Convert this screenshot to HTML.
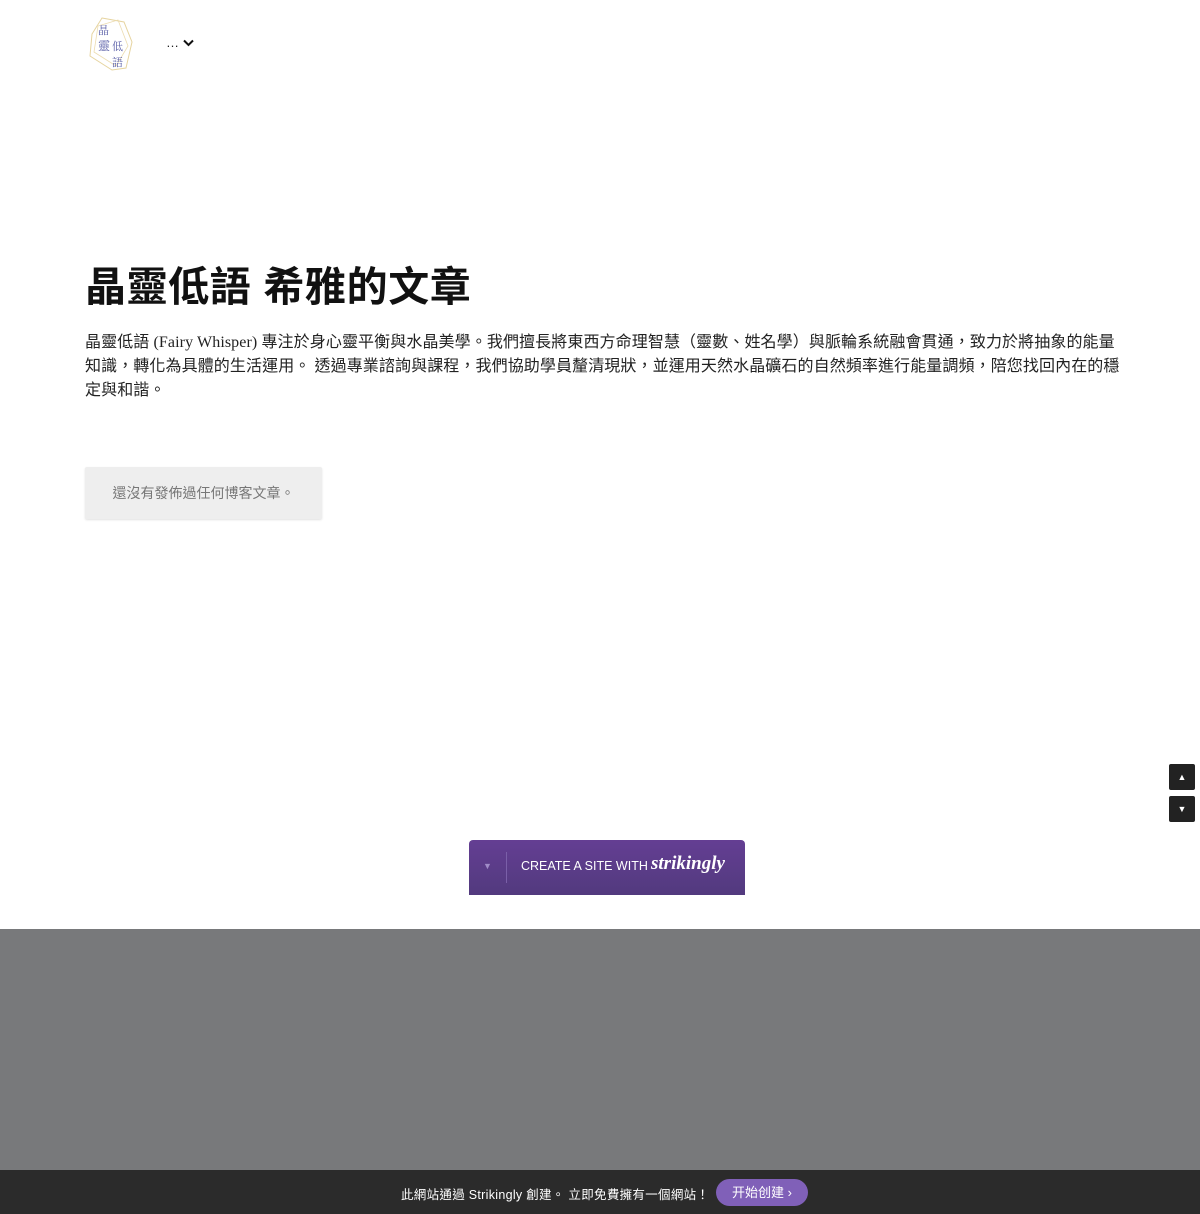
<!DOCTYPE html>
<html><head><meta charset="utf-8"><style>
body{margin:0;width:1200px;height:1214px;background:#fff;position:relative;overflow:hidden;font-family:"Liberation Sans","Noto Sans CJK TC",sans-serif;}
.abs{position:absolute}
h1{position:absolute;left:85px;top:258px;margin:0;font-size:41px;font-weight:700;color:#111;letter-spacing:0.6px;font-family:"Liberation Sans","Noto Sans CJK TC",sans-serif;line-height:58px}
.p{position:absolute;left:85px;top:331px;width:1040px;font-size:16px;letter-spacing:0.1px;line-height:24px;color:#222;font-family:"Liberation Serif","Noto Sans CJK TC",serif}
.empty{position:absolute;left:85px;top:467px;width:237px;height:52px;background:#eeeeee;border-radius:2px;box-shadow:0 1px 2px rgba(0,0,0,.12);color:#777;font-size:14px;line-height:52px;text-align:center}
.arr{position:absolute;left:1169px;width:26px;height:26px;background:#222;border-radius:2px;color:#fff;font-size:9px;text-align:center;line-height:26px}
.btn{position:absolute;left:469px;top:840px;width:276px;height:55px;background:linear-gradient(#643e93,#523a7e);border-radius:4px 4px 0 0;color:#fff}
.gray{position:absolute;left:0;top:929px;width:1200px;height:241px;background:#78797b}
.bar{position:absolute;left:0;top:1170px;width:1200px;height:44px;background:#2b2b2b;color:#fff;font-size:13px}
</style></head><body>
<svg class="abs" style="left:88px;top:16px" width="46" height="56" viewBox="0 0 46 56">
<polygon points="14,2 36,6 44,26 38,52 24,54 2,40 4,18" fill="none" stroke="#e6d4a0" stroke-width="1"/>
<polygon points="10,10 30,4 40,30 28,50 6,36" fill="none" stroke="#ecdcb0" stroke-width="0.8"/>
<text x="10" y="18" font-size="11" fill="#5a5fa8" font-family="Noto Serif CJK SC,serif">晶</text>
<text x="10" y="34" font-size="12" fill="#5a5fa8" font-family="Noto Serif CJK SC,serif">靈</text>
<text x="24" y="34" font-size="11" fill="#5a5fa8" font-family="Noto Serif CJK SC,serif">低</text>
<text x="24" y="50" font-size="11" fill="#5a5fa8" font-family="Noto Serif CJK SC,serif">語</text>
</svg>
<div class="abs" style="left:166px;top:35px;font-size:13px;color:#222">… <svg width="11" height="8" viewBox="0 0 11 8"><path d="M1 1.5 L5.5 6 L10 1.5" fill="none" stroke="#111" stroke-width="2"/></svg></div>
<h1>晶靈低語 希雅的文章</h1>
<div class="p">晶靈低語 (Fairy Whisper) 專注於身心靈平衡與水晶美學。我們擅長將東西方命理智慧（靈數、姓名學）與脈輪系統融會貫通，致力於將抽象的能量知識，轉化為具體的生活運用。 透過專業諮詢與課程，我們協助學員釐清現狀，並運用天然水晶礦石的自然頻率進行能量調頻，陪您找回內在的穩定與和諧。</div>
<div class="empty">還沒有發佈過任何博客文章。</div>
<div class="arr" style="top:764px">▲</div>
<div class="arr" style="top:796px">▼</div>
<div class="btn">
<div class="abs" style="left:14px;top:21px;font-size:9px;color:#a08cc8">▼</div>
<div class="abs" style="left:37px;top:12px;width:1px;height:31px;background:#7a5fa8"></div>
<div class="abs" style="left:52px;top:19px;font-size:12.5px;letter-spacing:0">CREATE A SITE WITH</div>
<div class="abs" style="left:182px;top:13px;font-size:19px;font-weight:700;font-style:italic;font-family:'Liberation Serif',serif">strikingly</div>
</div>
<div class="gray"></div>
<div class="bar">
<div class="abs" style="left:401px;top:14px;font-size:12.5px;letter-spacing:0.3px">此網站通過 Strikingly 創建。 立即免費擁有一個網站！</div>
<div class="abs" style="left:716px;top:9px;width:92px;height:27px;border-radius:14px;background:#8060b8;font-size:13px;line-height:27px;text-align:center">开始创建 ›</div>
</div>
</body></html>
